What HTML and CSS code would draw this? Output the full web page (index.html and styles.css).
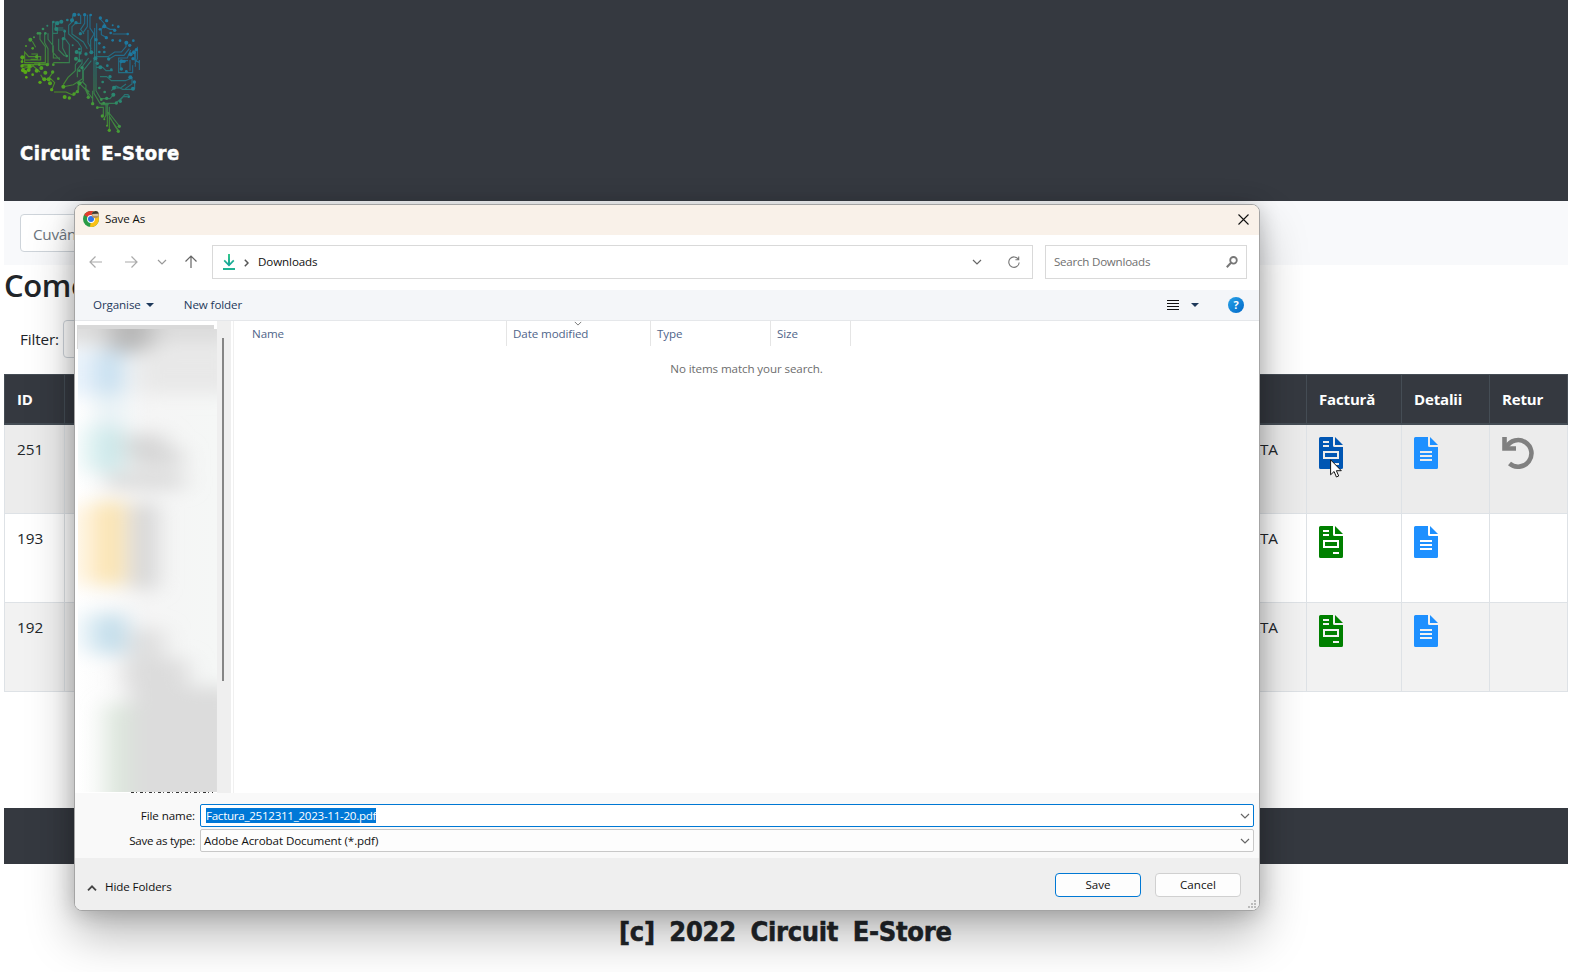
FILE: index.html
```
<!DOCTYPE html>
<html lang="ro">
<head>
<meta charset="utf-8">
<title>Circuit E-Store</title>
<link rel="stylesheet" href="styles.css">
</head>
<body>
<svg class="defs" width="0" height="0" aria-hidden="true">
  <symbol id="invoice" viewBox="0 0 24 32"><path fill-rule="evenodd" d="M1.500 0H14v8.500a1.500 1.500 0 0 0 1.500 1.500H24v20.500a1.500 1.500 0 0 1-1.500 1.500h-21A1.500 1.500 0 0 1 0 30.500v-29A1.500 1.500 0 0 1 1.500 0zM4 4v2h6V4zm0 4v2h6V8zm0 6v8h16v-8zm2 2h12v4H6zm8 10v2h6v-2z"/><path d="M16 0l8 8h-8z"/></symbol>
  <symbol id="details" viewBox="0 0 24 32"><path fill-rule="evenodd" d="M1.500 0H14v8.500a1.500 1.500 0 0 0 1.500 1.500H24v20.500a1.500 1.500 0 0 1-1.500 1.500h-21A1.500 1.500 0 0 1 0 30.500v-29A1.500 1.500 0 0 1 1.500 0zM6 14v2h12v-2zm0 4v2h12v-2zm0 4v2h12v-2z"/><path d="M16 0l8 8h-8z"/></symbol>
  <symbol id="chevron" viewBox="0 0 10 6"><path d="M1 1l4 4 4-4" fill="none" stroke="currentColor" stroke-width="1.200"/></symbol>
  <symbol id="triangle" viewBox="0 0 8 4"><path d="M0 0h8L4 4z"/></symbol>
</svg>

<div class="page">
  <header class="header">
    <svg class="brain" viewBox="60 36 363 366" fill="none">
      <defs><linearGradient id="g" gradientUnits="userSpaceOnUse" x1="120" y1="300" x2="310" y2="120"><stop offset="0" stop-color="#5fae0b"/><stop offset=".35" stop-color="#4b9f2c"/><stop offset=".68" stop-color="#288575"/><stop offset="1" stop-color="#1d789f"/></linearGradient></defs>
      <g stroke="url(#g)" stroke-width="3.300" opacity=".8">
        <path d="M120 100v18l16 22v48h-62v-32l12 14h36v10H76M92 178h20v-16h-18M134 100v28l10 18v48H66M144 100v18l16 20v36h20M158 66v90l22 24M158 100h14V84h18M184 66h-18v24h28v24l14 20v54h-48M176 116v34l18 18M188 114v30l12 24M67 170v16M66 198h30M66 206l34-8 20 18M84 210l20-18h44M97 124l10 18"/>
        <path d="M218 46v18l-12 12v26l28 24 10 16v14M228 68l-12 12v22l34 24 12 20M242 44v26h-14M254 44v26l-12 18 10 14M262 44v36l-14 20M270 44v40l12 18-10 18v38M284 84v98M290 70v112M264 90v38l10 18M282 178v102l18 30h46l24-20h12M288 182v90l14 24h28l12-14M274 182l-24 30v30l-16 16v20M266 174l-18 24v38l-28 18-30 6"/>
        <path d="M238 162v18l-12 14v18l-22 20-14 22M246 178v12l-14 18v24M288 170h36l20-14h20l14-16V126M326 178l20-12h26l16-20M338 102h42M298 54l16 18-10 16v16l14 8M346 88h-16l-16-8M412 140v36l-8 16M404 156v24l14 8v20M418 180v30M392 150l-10 24h-26v44h42v-22M384 182h-22v24M390 180v32M406 160v40M288 202h20l10 10h20M300 230h20l14 12h42l20-8M340 264h22l16-12M396 232v20l-20 14M400 268h-32l-20-10-14 14M386 284h-12l-14 18M404 244v22"/>
        <path d="M146 238h-16l-8-14M158 218l-10 14 16 16-8 20M162 276h36l22 10 16-18V248l20 20 10 22M248 246l10 10v14l20 26v16M254 264l14 12M278 272v40M302 314h24M290 322h20v26M318 316v30l-6 10M322 316v62M328 320v20l30 38M328 350v40M324 336l6 18 26 38M330 352l16 28 10 14"/>
      </g>
      <g fill="url(#g)">
        <circle cx="91" cy="119" r="6"/><circle cx="142" cy="77" r="3"/><circle cx="129" cy="87" r="4"/><circle cx="102" cy="112" r="3"/><circle cx="114" cy="100" r="4"/><circle cx="120" cy="100" r="4"/><circle cx="136" cy="100" r="4"/><circle cx="78" cy="138" r="3"/><circle cx="98" cy="145" r="4"/>
        <circle cx="184" cy="65" r="6"/><circle cx="172" cy="70" r="6"/><circle cx="160" cy="66" r="4"/><circle cx="169" cy="87" r="6"/><circle cx="194" cy="94" r="4"/><circle cx="223" cy="44" r="6"/><circle cx="236" cy="44" r="4"/><circle cx="254" cy="44" r="5"/><circle cx="272" cy="45" r="4"/><circle cx="216" cy="61" r="6"/><circle cx="228" cy="68" r="5"/><circle cx="202" cy="60" r="4"/><circle cx="241" cy="101" r="5"/><circle cx="190" cy="116" r="5"/>
        <circle cx="301" cy="54" r="5"/><circle cx="320" cy="62" r="5"/><circle cx="313" cy="79" r="6"/><circle cx="338" cy="76" r="3"/><circle cx="355" cy="80" r="4"/><circle cx="344" cy="91" r="5"/><circle cx="332" cy="99" r="4"/><circle cx="383" cy="102" r="4"/><circle cx="300" cy="88" r="4"/><circle cx="319" cy="113" r="5"/><circle cx="288" cy="119" r="5"/><circle cx="298" cy="130" r="4"/><circle cx="312" cy="142" r="4"/><circle cx="298" cy="156" r="4"/><circle cx="313" cy="156" r="4"/><circle cx="338" cy="121" r="4"/><circle cx="360" cy="122" r="4"/><circle cx="379" cy="128" r="6"/><circle cx="389" cy="136" r="5"/><circle cx="400" cy="122" r="4"/><circle cx="409" cy="149" r="5"/><circle cx="392" cy="163" r="6"/><circle cx="402" cy="157" r="6"/><circle cx="399" cy="176" r="5"/><circle cx="286" cy="175" r="6"/><circle cx="326" cy="177" r="5"/><circle cx="364" cy="184" r="6"/><circle cx="372" cy="184" r="5"/><circle cx="364" cy="207" r="5"/><circle cx="379" cy="214" r="4"/>
        <circle cx="274" cy="157" r="6"/><circle cx="238" cy="147" r="4"/><circle cx="230" cy="156" r="6"/><circle cx="240" cy="159" r="5"/><circle cx="258" cy="162" r="5"/><circle cx="228" cy="176" r="6"/><circle cx="238" cy="182" r="5"/><circle cx="218" cy="136" r="3"/><circle cx="200" cy="168" r="4"/><circle cx="246" cy="203" r="5"/><circle cx="238" cy="212" r="4"/><circle cx="292" cy="190" r="5"/><circle cx="301" cy="202" r="6"/><circle cx="322" cy="197" r="4"/><circle cx="334" cy="209" r="4"/><circle cx="330" cy="230" r="5"/><circle cx="308" cy="246" r="4"/><circle cx="342" cy="263" r="6"/><circle cx="391" cy="232" r="6"/><circle cx="403" cy="246" r="5"/><circle cx="399" cy="266" r="6"/><circle cx="340" cy="284" r="6"/><circle cx="361" cy="304" r="5"/><circle cx="349" cy="309" r="5"/><circle cx="298" cy="264" r="4"/><circle cx="314" cy="276" r="4"/><circle cx="320" cy="295" r="5"/><circle cx="304" cy="299" r="4"/><circle cx="386" cy="290" r="4"/>
        <circle cx="67" cy="172" r="6"/><circle cx="66" cy="185" r="4"/><circle cx="66" cy="198" r="5"/><circle cx="69" cy="211" r="6"/><circle cx="76" cy="216" r="6"/><circle cx="88" cy="198" r="6"/><circle cx="86" cy="210" r="6"/><circle cx="98" cy="224" r="4"/><circle cx="79" cy="232" r="4"/><circle cx="110" cy="212" r="6"/><circle cx="124" cy="204" r="6"/><circle cx="118" cy="194" r="4"/><circle cx="142" cy="194" r="5"/><circle cx="160" cy="194" r="4"/><circle cx="158" cy="216" r="5"/><circle cx="136" cy="218" r="6"/><circle cx="146" cy="238" r="6"/><circle cx="133" cy="238" r="6"/><circle cx="120" cy="247" r="5"/><circle cx="150" cy="250" r="6"/><circle cx="155" cy="269" r="5"/><circle cx="175" cy="236" r="4"/><circle cx="190" cy="260" r="6"/><circle cx="194" cy="291" r="6"/><circle cx="208" cy="294" r="5"/><circle cx="222" cy="282" r="5"/><circle cx="232" cy="275" r="5"/><circle cx="238" cy="250" r="6"/><circle cx="265" cy="292" r="5"/><circle cx="278" cy="311" r="5"/><circle cx="292" cy="323" r="4"/><circle cx="311" cy="309" r="4"/><circle cx="307" cy="348" r="5"/><circle cx="313" cy="358" r="3"/><circle cx="358" cy="379" r="5"/><circle cx="328" cy="391" r="5"/><circle cx="355" cy="394" r="5"/><circle cx="321" cy="377" r="3"/><circle cx="110" cy="170" r="5"/>
      </g>
    </svg>
    <div class="brand">Circuit E-Store</div>
  </header>
  <div class="searchbar"><div class="input keyword">Cuvân</div></div>
  <h2 class="title">Come</h2>
  <div class="filter"><span>Filter:</span><div class="input filter-input"></div></div>
  <table class="orders">
    <colgroup><col class="c-id"><col class="c-state"><col class="c-invoice"><col class="c-details"><col class="c-return"></colgroup>
    <thead><tr><th>ID</th><th></th><th>Factură</th><th>Detalii</th><th>Retur</th></tr></thead>
    <tbody>
      <tr class="hover"><td>251</td><td class="state">ATA</td><td><svg class="doc blue"><use href="#invoice"/></svg></td><td><svg class="doc light"><use href="#details"/></svg></td><td><svg class="undo" viewBox="0 0 32 32"><path d="M2.500 0v11.500H14" fill="none" stroke="currentColor" stroke-width="4.600"/><path d="M4.500 10A13.300 13.300 0 1 1 7.500 26.500" fill="none" stroke="currentColor" stroke-width="4.600"/></svg></td></tr>
      <tr><td>193</td><td class="state">ATA</td><td><svg class="doc green"><use href="#invoice"/></svg></td><td><svg class="doc light"><use href="#details"/></svg></td><td></td></tr>
      <tr class="odd"><td>192</td><td class="state">ATA</td><td><svg class="doc green"><use href="#invoice"/></svg></td><td><svg class="doc light"><use href="#details"/></svg></td><td></td></tr>
    </tbody>
  </table>
  <div class="footbar"></div>
  <footer class="copyright">[c] 2022 Circuit E-Store</footer>
</div>

<section class="dialog">
  <div class="titlebar">
    <svg class="chrome" viewBox="0 0 16 16"><circle cx="8" cy="8" r="8" fill="#2a9b46"/><path d="M8 8L1.100 4A8 8 0 0 1 15 4z" fill="#e33b2e"/><path d="M8 8l6.900-4A8 8 0 0 1 8 16l-1-.1z" fill="#fbc116"/><circle cx="8" cy="8" r="3.900" fill="#fff"/><circle cx="8" cy="8" r="3" fill="#2f73e8"/><circle cx="12.300" cy="3.600" r="3.600" fill="#b8925c"/><path d="M8.700 3a3.700 3.700 0 0 1 7.100-.4z" fill="#3b3935"/><path d="M9.500 4h5.500" stroke="#eee" stroke-width="1"/></svg>
    <span>Save As</span>
    <svg class="close" viewBox="0 0 11 11"><path d="M.5.5l10 10M10.500.5l-10 10" stroke="#111" stroke-width="1.100"/></svg>
  </div>
  <div class="nav">
    <svg class="arrow" viewBox="0 0 14 14"><path d="M13 7H1M6.500 1.500L1 7l5.500 5.500"/></svg>
    <svg class="arrow forward" viewBox="0 0 14 14"><path d="M1 7h12M7.500 1.500L13 7l-5.500 5.500"/></svg>
    <svg class="chev recent"><use href="#chevron"/></svg>
    <svg class="arrow up" viewBox="0 0 14 14"><path d="M7 13V1M1.500 6.500L7 1l5.500 5.500"/></svg>
    <div class="address">
      <svg class="download" viewBox="0 0 12 16"><defs><linearGradient id="dl" x2="0" y2="1"><stop stop-color="#35ca8b"/><stop offset="1" stop-color="#119e9a"/></linearGradient></defs><path d="M5 0h2v9l3.200-3.200 1.200 1.300L6 12.500.6 7.100l1.200-1.300L5 9z" fill="url(#dl)"/><path d="M0 14h12v2H0z" fill="#1fb293"/></svg>
      <svg class="crumb" viewBox="0 0 5 8"><path d="M.8.8L4 4 .8 7.200" fill="none" stroke="#555" stroke-width="1.500"/></svg>
      <span class="crumb-text">Downloads</span>
      <svg class="chev addr-chev"><use href="#chevron"/></svg>
      <svg class="refresh" viewBox="0 0 12 13"><path d="M10.500 3.500A5.200 5.200 0 1 0 11.200 6.500M10.700.5v3.300H7.400" fill="none" stroke="#777" stroke-width="1.100"/></svg>
    </div>
    <div class="search"><span class="search-text">Search Downloads</span><svg class="glass" viewBox="0 0 12 12"><circle cx="7.500" cy="4.300" r="3.300" fill="none" stroke="#777" stroke-width="1.800"/><path d="M5 6.700L.8 11.200" stroke="#777" stroke-width="2"/></svg></div>
  </div>
  <div class="toolbar">
    <span class="organise">Organise</span><svg class="tri"><use href="#triangle"/></svg>
    <span class="newfolder">New folder</span>
    <svg class="list" viewBox="0 0 12 11"><path d="M0 .5h12M0 3.500h12M0 6.500h12M0 9.500h12" stroke="#111" stroke-width="1"/></svg>
    <svg class="tri view-tri"><use href="#triangle"/></svg>
    <span class="help">?</span>
  </div>
  <div class="browser">
    <div class="tree">
      <svg class="haze" viewBox="0 0 139 463">
        <defs>
          <filter id="soft" x="-50%" y="-50%" width="200%" height="200%"><feGaussianBlur stdDeviation="12 9"/></filter>
          <linearGradient id="pale"><stop stop-color="#fff"/><stop offset=".5" stop-color="#f5f5f5"/><stop offset="1" stop-color="#f5f7f6"/></linearGradient>
        </defs>
        <path d="M0 0h139v463H0z" fill="url(#pale)"/>
        <g filter="url(#soft)">
          <path d="M-20-30h180v46H-20z" fill="#dcdcdc"/>
          <path d="M30-30h45v55H30z" fill="#b8b8b8"/>
          <path d="M60 20h100v45H60z" fill="#e8e8e8"/>
          <path d="M-20 22h38v45h-38z" fill="#e8f2fb"/>
          <path d="M18 22h28v45H18z" fill="#c4deef"/>
          <path d="M18 65h28v35H18z" fill="#e6f1f5"/>
          <path d="M0 98h20v45H0z" fill="#e8f6f6"/>
          <path d="M20 98h24v45H20z" fill="#c6e6e8"/>
          <path d="M48 105h40v20H48zM52 120h52v18H52zM28 145h78v14H28z" fill="#d6d6d6"/>
          <path d="M-6 176h26v80H-6z" fill="#fff3dc"/>
          <path d="M20 172h26v84H20z" fill="#fae1a8"/>
          <path d="M54 175h24v85H54z" fill="#d2d2d2"/>
          <path d="M0 285h20v38H0z" fill="#e4f1f7"/>
          <path d="M20 285h28v40H20z" fill="#bfdcea"/>
          <path d="M52 300h34v60H52z" fill="#dedede"/>
          <path d="M46 330h64v28H46zM52 358h110v130H52z" fill="#dcdcdc"/>
          <path d="M28 375h24v120H28z" fill="#dce7dc"/>
        </g>
      </svg>
      <div class="sliver"></div>
    </div>
    <div class="track"><div class="thumb"></div></div>
    <div class="files">
      <div class="columns"><span class="col name">Name</span><span class="col date">Date modified<svg class="sort"><use href="#chevron"/></svg></span><span class="col type">Type</span><span class="col size">Size</span></div>
      <p class="empty">No items match your search.</p>
    </div>
  </div>
  <div class="fields">
    <label class="label-name">File name:</label><div class="combo focused"><span class="selected">Factura_2512311_2023-11-20.pdf</span><svg class="chev"><use href="#chevron"/></svg></div>
    <label class="label-type">Save as type:</label><div class="combo"><span class="filetype">Adobe Acrobat Document (*.pdf)</span><svg class="chev"><use href="#chevron"/></svg></div>
  </div>
  <div class="actions">
    <svg class="fold" viewBox="0 0 10 6"><path d="M1 5.300l4-4 4 4" fill="none" stroke="#444" stroke-width="1.800"/></svg>
    <span class="hide">Hide Folders</span>
    <button class="btn primary">Save</button><button class="btn">Cancel</button>
    <svg class="grip" viewBox="0 0 8 8"><path d="M6 0h2v2H6zM3 3h2v2H3zM6 3h2v2H6zM0 6h2v2H0zM3 6h2v2H3zM6 6h2v2H6z" fill="#bbb"/></svg>
  </div>
</section>
<svg class="cursor" viewBox="0 0 12 19"><path d="M.6.8v15l3.500-3.300 2.300 5.500 2.300-1-2.300-5.300h4.900z" fill="#fff" stroke="#111" stroke-width="1"/></svg>
</body>
</html>
```
FILE: styles.css
```
* { box-sizing: border-box; }
body { margin: 0; width: 1573px; height: 972px; overflow: hidden; position: relative; background: #fff; color: #212529; font: 15.3px/24px "Open Sans", "Noto Sans", sans-serif; }
svg { display: block; flex: none; fill: currentColor; }
.defs { position: absolute; }
.page { width: 1564px; margin-left: 4px; }

.header { height: 201px; padding: 12px 16px 0; background: #353940; }
.brain { width: 121px; height: 122px; fill: none; }
.brand { margin-top: 7px; color: #fff; font: bold 20px/24px "DejaVu Sans Condensed", "DejaVu Sans", sans-serif; word-spacing: 4px; letter-spacing: .55px; -webkit-text-stroke: .5px #fff; white-space: nowrap; }
.searchbar { height: 64px; padding: 13px 16px; background: #f8f9fb; }
.input { border: 1px solid #ced4da; border-radius: 4px; background: #fff; height: 38px; }
.keyword { width: 240px; padding: 7px 12px; color: #6c757d; letter-spacing: -.3px; }
.title { margin: 0; height: 55px; padding-top: 1px; font-size: 31px; line-height: 38px; font-weight: 600; letter-spacing: -.4px; }
.filter { display: flex; align-items: center; gap: 4px; height: 38px; padding-left: 16px; letter-spacing: -.15px; }
.filter-input { width: 200px; }

.orders { margin-top: 16px; width: 1564px; table-layout: fixed; border-collapse: collapse; }
.c-id { width: 60px; } .c-state { width: 1242px; } .c-invoice { width: 95px; } .c-details { width: 88px; }
.orders th { height: 49px; padding: 0 12px; text-align: left; color: #fff; background: #353940; border: 1px solid #454d55; border-bottom-width: 2px; font-size: 15px; letter-spacing: -.15px; }
.orders td { height: 89px; padding: 12px; vertical-align: top; border: 1px solid #dee2e6; }
.orders .hover td { height: 90px; background: #ececec; }
.orders .odd td { background: #f2f2f2; }
.orders .state { text-align: right; padding-right: 28px; }
.doc { width: 24px; height: 32px; }
.blue { color: #0056b3; } .green { color: #008000; } .light { color: #1e90ff; }
.undo { width: 32px; height: 32px; color: #808080; }
.footbar { margin-top: 116px; height: 56px; background: #353940; }
.copyright { margin-top: 50px; padding-left: 615px; color: #212529; font: bold 27px/36px "DejaVu Sans Condensed", "DejaVu Sans", sans-serif; letter-spacing: -.3px; word-spacing: 6.500px; -webkit-text-stroke: .5px #212529; white-space: nowrap; }

.dialog { position: absolute; left: 74px; top: 204px; width: 1186px; height: 707px; display: flex; flex-direction: column; overflow: hidden; border: 1px solid #a4a4a4; border-radius: 8px; background: #fff; color: #111; font-size: 11.6px; line-height: 16px; letter-spacing: -.1px; box-shadow: 0 24px 48px rgba(0,0,0,.28), 0 2px 21px rgba(0,0,0,.2); white-space: nowrap; }
.titlebar { height: 30px; display: flex; align-items: center; padding: 0 10px 2px 8px; background: #f9f1e9; }
.chrome { width: 16px; height: 16px; margin-right: 6px; }
.close { width: 11px; height: 11px; margin-left: auto; }
.nav { height: 55px; display: flex; align-items: center; padding: 0 12px 2px 14px; }
.arrow { width: 14px; height: 14px; fill: none; stroke: #aaa; stroke-width: 1.200; }
.forward { margin-left: 21px; }
.chev { width: 10px; height: 6px; color: #666; }
.recent { margin-left: 19px; color: #999; }
.up { margin-left: 17px; stroke: #666; }
.address { width: 821px; height: 34px; margin-left: 14px; display: flex; align-items: center; padding: 0 12px 0 10px; border: 1px solid #d9d9d9; }
.download { width: 12px; height: 16px; }
.crumb { width: 5px; height: 8px; margin: 2px 9px 0; }
.addr-chev { margin-left: auto; }
.refresh { width: 12px; height: 13px; margin: 2px 0 0 26px; }
.search { width: 202px; height: 34px; margin-left: 12px; display: flex; align-items: center; justify-content: space-between; padding: 0 8px; border: 1px solid #d9d9d9; color: #707070; }
.search-text { letter-spacing: -.25px; }
.glass { width: 12px; height: 12px; }
.toolbar { height: 31px; display: flex; align-items: center; padding: 0 15px 0 18px; background: #f4f6f9; border-bottom: 1px solid #e5e7ea; color: #1e395b; }
.tri { width: 8px; height: 4px; margin-left: 5px; }
.newfolder { margin-left: 30px; }
.list { width: 12px; height: 11px; margin-left: auto; }
.view-tri { margin-left: 12px; }
.help { width: 16px; height: 16px; margin-left: 29px; border-radius: 50%; background: linear-gradient(135deg, #29a3e8, #0067c8); color: #fff; text-align: center; font-weight: 700; font-size: 11px; }
.browser { height: 472px; display: flex; }
.tree { width: 142px; padding: 8px 0 0 3px; background: linear-gradient(#d9d9d9, #d9d9d9) 2px 4px / 137px 24px no-repeat; }
.haze { width: 139px; height: 463px; overflow: hidden; }
.sliver { height: 1px; width: 82px; margin-left: 53px; background: repeating-linear-gradient(90deg, #333 0 3px, #fff 3px 5px, #555 5px 6px, #fff 6px 9px); }
.track { width: 14px; padding: 17px 0 0 5px; background: #efefef; }
.thumb { width: 2px; height: 343px; background: #858585; }
.files { margin-left: 2px; flex: 1; border-left: 1px solid #f0f0f0; }
.columns { display: flex; height: 25px; line-height: 25px; color: #50658a; }
.col { border-right: 1px solid #e5e5e5; padding-left: 6px; }
.name { width: 273px; padding-left: 18px; } .date { width: 144px; position: relative; } .type { width: 120px; } .size { width: 80px; }
.sort { position: absolute; left: 67px; top: 0; width: 8px; height: 5px; color: #777; }
.empty { margin: 15px 0 0; text-align: center; color: #6d6d6d; }
.fields { height: 65px; padding: 11px 5px 0 0; display: grid; grid-template-columns: 120px 1fr; column-gap: 5px; grid-auto-rows: 23px; row-gap: 2px; background: #f9f9f9; text-align: right; align-items: center; }
.label-type { letter-spacing: -.3px; }
.combo { height: 23px; display: flex; align-items: center; justify-content: space-between; padding: 0 3px; border: 1px solid #c8c8c8; border-radius: 2px; background: #fdfdfd; }
.focused { border-color: #0078d4; background: #fff; padding-left: 5px; }
.selected { height: 15px; line-height: 15px; margin-bottom: 1px; color: #fff; background: #0078d7; letter-spacing: -.28px; }
.actions { flex: 1; position: relative; display: flex; align-items: center; padding: 1px 18px 0 12px; background: #efefef; }
.fold { width: 10px; height: 6px; margin-top: 6px; }
.hide { margin: 5px auto 0 8px; }
.btn { width: 86px; height: 24px; margin-left: 14px; padding: 0; font: inherit; color: #111; background: #fdfdfd; border: 1px solid #d0d0d0; border-radius: 4px; }
.primary { border-color: #0078d4; }
.grip { position: absolute; right: 3px; bottom: 2px; width: 8px; height: 8px; }
.cursor { position: absolute; left: 1330px; top: 459px; width: 12px; height: 19px; }
```
